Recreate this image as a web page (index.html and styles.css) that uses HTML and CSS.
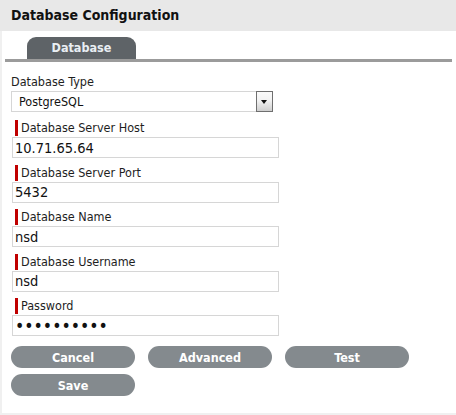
FILE: index.html
```html
<!DOCTYPE html>
<html lang="en">
<head>
    <meta charset="UTF-8">
    <title>Database Configuration</title>
    <link rel="stylesheet" href="styles.css">
</head>
<body>
    <!-- page title bar -->
    <div class="header">
        <h1>Database Configuration</h1>
    </div>

    <div class="panel">
        <!-- tab strip -->
        <div class="tabs">
            <span class="tab">Database</span>
        </div>

        <form class="form">
            <label class="plain">Database Type</label>
            <div class="select-wrap">
                <select>
                    <option>PostgreSQL</option>
                    <option>Oracle</option>
                    <option>SQL Server</option>
                </select>
                <span class="arrow"></span>
            </div>

            <label class="req">Database Server Host</label>
            <input type="text" value="10.71.65.64">

            <label class="req">Database Server Port</label>
            <input type="text" value="5432">

            <label class="req">Database Name</label>
            <input type="text" value="nsd">

            <label class="req">Database Username</label>
            <input type="text" value="nsd">

            <label class="req">Password</label>
            <input type="password" class="pw" value="nsdpasswd1">

            <div class="buttons">
                <button type="button">Cancel</button>
                <button type="button">Advanced</button>
                <button type="button">Test</button>
                <button type="button">Save</button>
            </div>
        </form>
    </div>
</body>
</html>
```

FILE: styles.css
```css
body {
    margin: 0;
    background-color: #f0f0f0;
    font-family: "DejaVu Sans Condensed", "DejaVu Sans", sans-serif;
    color: #1e1e1e;
}

.header {
    height: 31px;
    background-color: #e8e8e8;
}
.header h1 {
    margin: 0;
    padding-left: 11px;
    font-size: 14px;
    line-height: 31px;
    color: #111;
}

.panel {
    margin-left: 2px;
    height: 382px;
    background-color: #fff;
}

/* tab strip with the grey rule under it */
.tabs {
    display: flex;
    margin: 0 4px 0 3px;
    padding: 6px 0 0 22px;
    border-bottom: 3px solid #9b9b9b;
}
.tab {
    width: 109px;
    height: 22px;
    line-height: 22px;
    text-align: center;
    background-color: #5e6367;
    border-radius: 9px 9px 0 0;
    color: #e9eef3;
    font-weight: bold;
    font-size: 12.5px;
}

.form {
    padding-left: 9px;
}

.form label {
    display: block;
    height: 16px;
    line-height: 16px;
    font-size: 12.5px;
}
.form label.plain {
    margin-top: 12px;
    margin-bottom: 1px;
}
.form label.req {
    margin-left: 4px;
    padding-left: 3px;
    border-left: 3px solid #c00000;
}

.select-wrap {
    position: relative;
    width: 262px;
    height: 21px;
    margin-bottom: 8px;
}
.select-wrap select {
    -webkit-appearance: none;
    appearance: none;
    width: 100%;
    height: 21px;
    margin: 0;
    padding: 0 0 0 7px;
    border: 1px solid #d6d6d6;
    border-radius: 0;
    background: #fff;
    font-family: inherit;
    font-size: 12.5px;
    color: #111;
}
/* fake dropdown button over the right end of the select */
.select-wrap .arrow {
    position: absolute;
    top: 0;
    right: 0;
    width: 17px;
    height: 21px;
    box-sizing: border-box;
    border: 1px solid #6f6f6f;
    background: linear-gradient(#fafafa 0%, #f2f2f2 45%, #cfcfcf 100%);
    pointer-events: none;
}
.select-wrap .arrow::after {
    content: "";
    position: absolute;
    left: 4px;
    top: 8px;
    border-left: 3.5px solid transparent;
    border-right: 3.5px solid transparent;
    border-top: 4px solid #111;
}

.form input {
    display: block;
    box-sizing: border-box;
    width: 267px;
    height: 21px;
    margin: 1px 0 6.5px 1px;
    padding: 0 2px;
    border: 1px solid #d6d6d6;
    font-family: inherit;
    font-size: 14.5px;
    color: #111;
}
.form input.pw {
    font-size: 17.5px;
}

.buttons {
    display: grid;
    grid-template-columns: repeat(3, 124px);
    column-gap: 13px;
    row-gap: 6px;
    margin-top: 10px;
}
.buttons button {
    height: 22px;
    padding: 0;
    border: none;
    border-radius: 11px;
    background-color: #848a8e;
    color: #fff;
    font-family: inherit;
    font-weight: bold;
    font-size: 12.5px;
}
```
